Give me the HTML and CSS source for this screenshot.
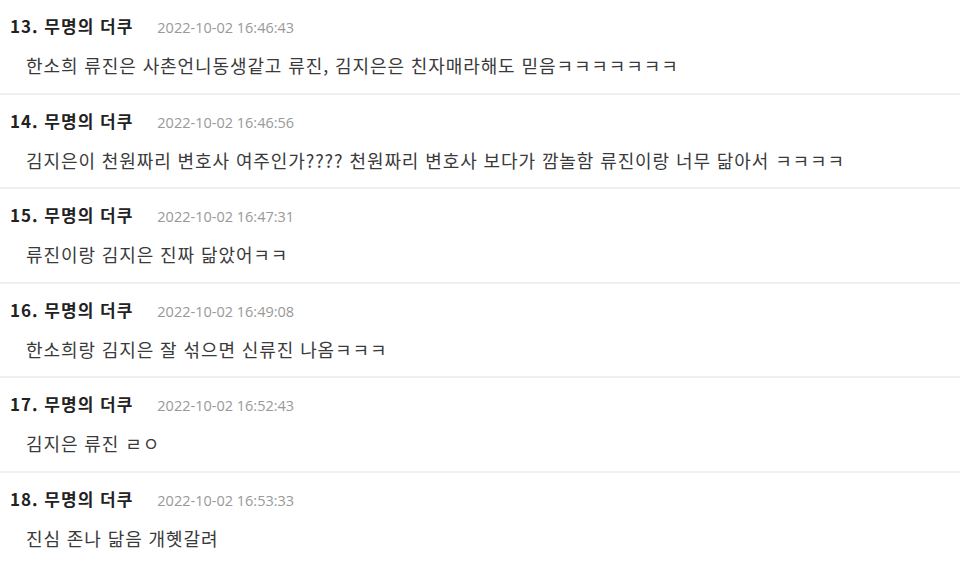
FILE: index.html
```html
<!DOCTYPE html>
<html lang="ko">
<head>
<meta charset="utf-8">
<link rel="stylesheet" href="styles.css">
</head>
<body>
<ul class="comments">
  <li class="comment">
    <div class="meta"><span class="author">13. 무명의 더쿠</span><span class="date">2022-10-02 16:46:43</span></div>
    <p class="text">한소희 류진은 사촌언니동생같고 류진, 김지은은 친자매라해도 믿음ㅋㅋㅋㅋㅋㅋㅋ</p>
  </li>
  <li class="comment">
    <div class="meta"><span class="author">14. 무명의 더쿠</span><span class="date">2022-10-02 16:46:56</span></div>
    <p class="text">김지은이 천원짜리 변호사 여주인가???? 천원짜리 변호사 보다가 깜놀함 류진이랑 너무 닮아서 ㅋㅋㅋㅋ</p>
  </li>
  <li class="comment">
    <div class="meta"><span class="author">15. 무명의 더쿠</span><span class="date">2022-10-02 16:47:31</span></div>
    <p class="text">류진이랑 김지은 진짜 닮았어ㅋㅋ</p>
  </li>
  <li class="comment">
    <div class="meta"><span class="author">16. 무명의 더쿠</span><span class="date">2022-10-02 16:49:08</span></div>
    <p class="text">한소희랑 김지은 잘 섞으면 신류진 나옴ㅋㅋㅋ</p>
  </li>
  <li class="comment">
    <div class="meta"><span class="author">17. 무명의 더쿠</span><span class="date">2022-10-02 16:52:43</span></div>
    <p class="text">김지은 류진 ㄹㅇ</p>
  </li>
  <li class="comment">
    <div class="meta"><span class="author">18. 무명의 더쿠</span><span class="date">2022-10-02 16:53:33</span></div>
    <p class="text">진심 존나 닮음 개혯갈려</p>
  </li>
</ul>
</body>
</html>
```
FILE: styles.css
```css
html, body {
  margin: 0;
  padding: 0;
  background: #fff;
}
body {
  font-family: "Noto Sans CJK KR", "Noto Sans", sans-serif;
  color: #333;
}
.comments {
  list-style: none;
  margin: 0;
  padding: 0;
}
.comment {
  padding: 14px 0 15.5px 0;
  border-bottom: 2px solid #efefef;
  display: flex;
  flex-direction: column;
  gap: 15px;
}
.meta {
  display: flex;
  align-items: baseline;
  gap: 24px;
  padding-left: 10px;
  height: 24px;
  line-height: 24px;
}
.author {
  font-weight: bold;
  font-size: 17px;
  letter-spacing: 1px;
  color: #222;
}
.date {
  font-family: "Open Sans", "Noto Sans", sans-serif;
  font-size: 14.5px;
  color: #999;
}
.text {
  margin: 0;
  padding-left: 26px;
  font-size: 18px;
  letter-spacing: 0.9px;
  line-height: 24px;
  height: 24px;
  color: #3a3a3a;
}
```
